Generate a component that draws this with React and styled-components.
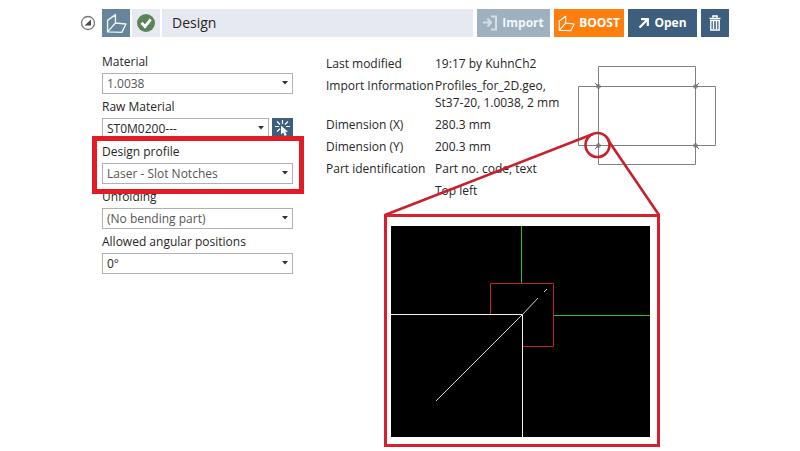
import React, { useState } from "react";
import styled, { createGlobalStyle, css } from "styled-components";

const GlobalStyle = createGlobalStyle`
  * { box-sizing: border-box; }
  body {
    margin: 0;
    background: #fff;
    color: #262626;
    font-family: "Open Sans", "Noto Sans", sans-serif;
    font-size: 12px;
  }
  button, select { font: inherit; }
`;

const Page = styled.main`
  padding: 9px 71px 4px 80px;
`;

const Toolbar = styled.header`
  display: flex;
  align-items: stretch;
  height: 28px;
`;

const Collapse = styled.button`
  display: grid;
  place-items: center;
  width: 16px;
  margin-right: 6px;
  padding: 0;
  border: 0;
  background: none;
`;

const Tile = styled.span`
  display: grid;
  place-items: center;
  width: 28px;
  margin-right: 2px;
  background: ${(p) => (p.$dark ? "#66859b" : "#e6e9ef")};
`;

const Title = styled.h1`
  flex: 1;
  margin: 0;
  padding-left: 10px;
  background: #e6e9ef;
  font-size: 14px;
  line-height: 28px;
  font-weight: 400;
`;

const Action = styled.button`
  display: flex;
  align-items: center;
  justify-content: center;
  gap: 4px;
  width: ${(p) => p.$width};
  margin-left: 4px;
  padding: 0;
  border: 0;
  background: ${(p) => p.$color};
  color: ${(p) => (p.disabled ? "#f4f7f9" : "#fff")};
  font-size: 12px;
  font-weight: 700;
  line-height: 28px;
`;

const Body = styled.div`
  display: grid;
  grid-template-columns: 224fr 252fr 151fr;
  align-items: start;
  margin-top: 14px;
  padding-left: 22px;
`;

const Form = styled.form`
  display: flex;
  flex-direction: column;
  gap: 2px;
  margin-right: 33px;
`;

const Field = styled.div`
  position: relative;
`;

const Label = styled.label`
  display: block;
  line-height: 22px;
`;

const Row = styled.div`
  display: flex;
  gap: 3px;
`;

const SelectBox = styled.div`
  position: relative;
  flex: 1;
`;

const Select = styled.select`
  display: block;
  appearance: none;
  width: 100%;
  height: 21px;
  padding: 0 20px 0 4px;
  border: 1px solid #aeb2b7;
  border-radius: 0;
  background: #fff;
  color: ${(p) => (p.$strong ? "#262626" : "#555")};
  line-height: 19px;
`;

const Arrow = styled.svg`
  position: absolute;
  right: 5px;
  top: 8px;
  pointer-events: none;
`;

const PickButton = styled.button`
  display: grid;
  place-items: center;
  width: 21px;
  height: 21px;
  padding: 0;
  border: 0;
  background: #3d5f7d;
`;

const Highlight = styled.span`
  position: absolute;
  z-index: 1;
  inset: -5px -11px -10px -10px;
  border: 5px solid #e21c25;
  pointer-events: none;
`;

const Info = styled.dl`
  display: grid;
  grid-template-columns: 109px 1fr;
  align-content: start;
  row-gap: 5px;
  margin: 4px 0 0;
  line-height: 17px;
  white-space: nowrap;
`;

const Term = styled.dt`
  margin: 0;
`;

const Value = styled.dd`
  margin: 0;
  ${(p) => p.$continued && css`grid-column: 2;`}
`;

const Preview = styled.figure`
  margin: 15px 0 0;
`;

const Drawing = styled.svg`
  display: block;
`;

const Callout = styled.svg`
  position: relative;
  display: block;
  margin: -35px 0 0 -195px;
  pointer-events: none;
`;

const FoldIcon = ({ color, size }) => (
  <svg width={size} height={size} viewBox="0 0 20 20" fill="none" stroke={color} strokeWidth="1.3" strokeLinejoin="round" aria-hidden="true">
    <path d="M1.5 7 9 1.5V9.5L1.5 18ZM9 9.5 19 10.5 15 18.5 1.5 18" />
  </svg>
);

const CollapseIcon = () => (
  <svg width="16" height="16" viewBox="0 0 16 16" aria-hidden="true">
    <circle cx="8" cy="8" r="6.5" fill="#fff" stroke="#777" strokeWidth="1.3" />
    <path d="M11 4.5V10.5H4.5Z" fill="#4a4a4a" />
  </svg>
);

const CheckIcon = () => (
  <svg width="20" height="20" viewBox="0 0 20 20" aria-hidden="true">
    <circle cx="10" cy="10" r="9" fill="#5a8455" />
    <path d="M5.5 9.8 9 13.5 14.8 6.3" fill="none" stroke="#fff" strokeWidth="2.8" />
  </svg>
);

const ImportIcon = () => (
  <svg width="15" height="16" viewBox="0 0 15 16" fill="none" stroke="#d5dee5" strokeWidth="2" aria-hidden="true">
    <path d="M0 7.5H7M4.5 3.5 8 7.5 4.5 11.5M8 1.5H13V14.5H8" />
  </svg>
);

const OpenIcon = () => (
  <svg width="12" height="12" viewBox="0 0 12 12" fill="none" stroke="#fff" strokeWidth="2.2" aria-hidden="true">
    <path d="M1.5 10.5 9 3M3 2.2H9.8V9" />
  </svg>
);

const TrashIcon = () => (
  <svg width="12" height="16" viewBox="0 0 12 16" fill="none" stroke="#fff" aria-hidden="true">
    <path d="M4 2.5V1H8V2.5M0.5 3.5H11.5" strokeWidth="1.6" />
    <path d="M1.8 5.5V15H10.2V5.5M4.5 6V14M7.5 6V14M1 5.5H11" strokeWidth="1.4" />
  </svg>
);

const PickIcon = () => (
  <svg width="17" height="17" viewBox="0 0 17 17" aria-hidden="true">
    <path d="M1 6.5H5M3 1.5 6 4.5M8.5 0V4M14 1.5 11 4.5M12 6.5H16M3 11.5 6 8.8" stroke="#fff" strokeWidth="1.2" />
    <path d="M7 5.5V14.5L9.2 12.6 10.8 16 12.8 15 11.2 11.8H14Z" fill="#fff" />
  </svg>
);

function SelectField({ id, label, value, strong, action, highlighted }) {
  return (
    <Field>
      <Label htmlFor={id}>{label}</Label>
      <Row>
        <SelectBox>
          <Select id={id} $strong={strong} defaultValue={value}>
            <option>{value}</option>
          </Select>
          <Arrow width="6" height="4" viewBox="0 0 6 4" aria-hidden="true">
            <path d="M0 0H6L3 3.6Z" fill="#333" />
          </Arrow>
        </SelectBox>
        {action}
      </Row>
      {highlighted && <Highlight />}
    </Field>
  );
}

const corners = [
  [20, 20, -1, -1],
  [117, 20, 1, -1],
  [20, 79, -1, 1],
  [117, 79, 1, 1],
];

function PartDrawing() {
  return (
    <Drawing width="139" height="100" viewBox="0 0 139 100" fill="none" stroke="#808080" role="img" aria-label="Part outline">
      <path d="M20.5 0.5H117.5V98.5H20.5ZM0.5 20.5H137.5V79.5H0.5Z" />
      {corners.map(([x, y, dx, dy]) => (
        <g key={`${x}-${y}`} stroke="#666">
          <circle cx={x + 0.5} cy={y + 0.5} r="1.8" />
          <path d={`M${x + 0.5} ${y + 0.5}l${dx * 3.5} ${dy * 3.5}`} />
        </g>
      ))}
    </Drawing>
  );
}

function DetailCallout() {
  return (
    <Callout width="278" height="316" viewBox="0 0 278 316" fill="none" role="img" aria-label="Slot notch detail">
      <g stroke="#c9202d" strokeWidth="3">
        <circle cx="214.5" cy="14" r="12" strokeWidth="2.6" />
        <path d="M210 3 2 84M225 9 276 84" strokeWidth="2.6" />
        <path d="M2.5 84.5H275.5V314.5H2.5Z" stroke="#d91f2b" />
      </g>
      <rect x="8" y="95" width="259" height="211" fill="#000" />
      <path d="M138.5 95V152M170 184.5H267" stroke="#25c22f" />
      <path d="M107.5 183V152.5H170.5V215.5H140" stroke="#c4232b" />
      <path d="M8 183.5H139.5V306" stroke="#f2f2f2" />
      <path d="M53 270 139 184 155 167M161 161l3-3" stroke="#d2d2ca" />
    </Callout>
  );
}

export default function App() {
  const [open, setOpen] = useState(true);
  return (
    <>
      <GlobalStyle />
      <Page>
        <Toolbar>
          <Collapse type="button" aria-label="Toggle section" aria-expanded={open} onClick={() => setOpen(!open)}>
            <CollapseIcon />
          </Collapse>
          <Tile $dark><FoldIcon color="#edf3f7" size="21" /></Tile>
          <Tile><CheckIcon /></Tile>
          <Title>Design</Title>
          <Action type="button" $width="73px" $color="#9fb0bf" disabled><ImportIcon />Import</Action>
          <Action type="button" $width="70px" $color="#ff7f0e"><FoldIcon color="#fff" size="17" />BOOST</Action>
          <Action type="button" $width="69px" $color="#3d5f7d"><OpenIcon />Open</Action>
          <Action type="button" $width="28px" $color="#3d5f7d" aria-label="Delete"><TrashIcon /></Action>
        </Toolbar>
        {open && (
          <Body>
            <Form>
              <SelectField id="material" label="Material" value="1.0038" />
              <SelectField
                id="raw"
                label="Raw Material"
                value="ST0M0200---"
                strong
                action={<PickButton type="button" aria-label="Pick raw material"><PickIcon /></PickButton>}
              />
              <SelectField id="profile" label="Design profile" value="Laser - Slot Notches" highlighted />
              <SelectField id="unfolding" label="Unfolding" value="(No bending part)" />
              <SelectField id="angles" label="Allowed angular positions" value="0°" strong />
            </Form>
            <Info>
              <Term>Last modified</Term>
              <Value>19:17 by KuhnCh2</Value>
              <Term>Import Information</Term>
              <Value>Profiles_for_2D.geo,<br />St37-20, 1.0038, 2 mm</Value>
              <Term>Dimension (X)</Term>
              <Value>280.3 mm</Value>
              <Term>Dimension (Y)</Term>
              <Value>200.3 mm</Value>
              <Term>Part identification</Term>
              <Value>Part no. code, text</Value>
              <Value $continued>Top left</Value>
            </Info>
            <Preview>
              <PartDrawing />
              <DetailCallout />
            </Preview>
          </Body>
        )}
      </Page>
    </>
  );
}
